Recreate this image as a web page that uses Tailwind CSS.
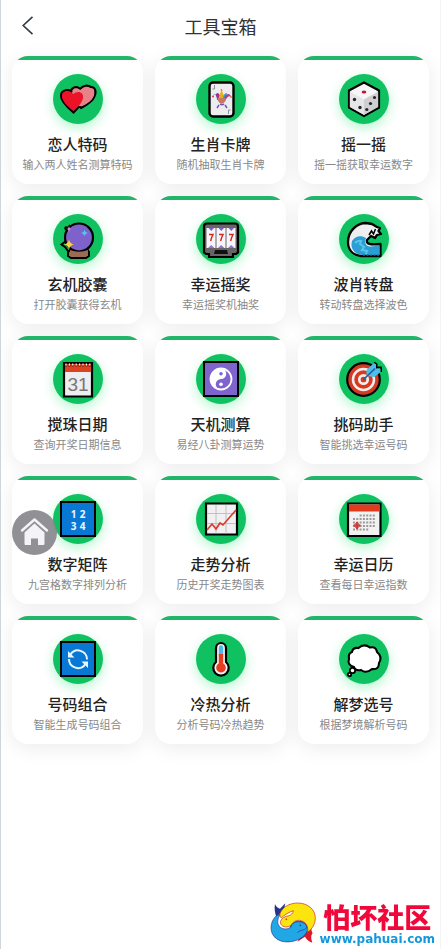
<!DOCTYPE html>
<html lang="zh-CN">
<head>
    <meta charset="UTF-8">
    <meta name="viewport" content="width=device-width, initial-scale=1.0">
    <title>工具宝箱</title>
    <script src="https://cdn.jsdelivr.net/npm/@tailwindcss/browser@4"></script>
</head>
<body class="bg-white font-['Noto_Sans_CJK_SC',sans-serif]">
    <div class="min-h-screen border-l border-l-gray-300 border-r border-r-gray-100">
        <header class="relative flex h-13 items-center justify-center">
            <button type="button" aria-label="返回" class="absolute left-4 flex h-8 w-6 items-center">
                <svg class="h-5 w-5" viewBox="0 0 20 20" fill="none" stroke="#333a45" stroke-width="1.6"><path d="M15.500 .8 6.200 9.500 15.500 18.200"/></svg>
            </button>
            <h1 class="text-lg text-[#333]">工具宝箱</h1>
        </header>

        <main id="herramientas" class="grid grid-cols-3 gap-3 px-[11px] pt-1 pb-8"></main>
    </div>

    <a href="#" aria-label="首页" class="fixed left-3 top-[510px] flex size-[45px] items-center justify-center rounded-full bg-[#858589]/90">
        <svg class="size-[45px]" viewBox="0 0 45 45">
            <path d="M10 20.500 22.500 9.500 35 20.500" fill="none" stroke="#f4f4f8" stroke-width="2.400" stroke-linejoin="round" stroke-linecap="round"/>
            <path d="M12.500 22.500 22.500 13.500 32.500 22.500V34a1 1 0 0 1-1 1H26v-6.500h-7V35h-5.500a1 1 0 0 1-1-1z" fill="#f4f4f8"/>
        </svg>
    </a>

    <a href="#" class="fixed right-1.5 bottom-1 flex items-center gap-1">
        <svg class="h-[42px] w-[46px]" viewBox="0 0 138 126">
            <path d="M15 6C18 14 23 18 30 20L46 4C44 17 41 25 32 33L19 44C15 34 12 20 15 6z" fill="#24348c"/>
            <path d="M100 94C112 86 119 80 124 71C123 82 125 88 128 94C123 99 122 107 127 122C117 119 110 112 105 104L82 119C89 109 93 101 100 94z" fill="#d9182b"/>
            <path d="M18 42C7 53 1 69 4 86C9 110 33 123 62 119C91 115 112 99 113 78C113 64 98 56 82 58C70 60 62 67 60 77C48 85 30 80 25 68C22 60 22 50 31 37z" fill="#22a7e5" stroke="#24348c" stroke-width="2"/>
            <path d="M31 32C41 12 61 3 85 3C112 4 137 21 136 50C135 66 128 79 113 91C116 73 107 57 88 55C77 54 68 60 64 69C54 78 38 76 33 67C26 54 43 43 54 42C64 40 69 33 70 26C58 30 44 38 34 48C29 44 29 38 31 32z" fill="#fbe50c" stroke="#c8202d" stroke-width="2"/>
            <path d="M62 77C65 63 77 57 92 60C106 63 111 71 110 78C102 87 86 83 82 93" fill="#22a7e5" stroke="#24348c" stroke-width="2"/>
            <circle cx="49" cy="52" r="2.500" fill="#c8202d"/><circle cx="91" cy="70" r="2.500" fill="#24348c"/>
        </svg>
        <span class="flex flex-col items-center">
            <span class="text-[27px] leading-8 font-black text-[#f0083a]">怕坏社区</span>
            <span class="font-['DejaVu_Sans',sans-serif] text-xs leading-3 font-bold text-[#1597dc]">www.pahuai.com</span>
        </span>
    </a>

    <script>
        // Patrones repetidos dentro de los iconos
        const puntos = [0, 1, 2, 3, 4].map(f => [0, 1, 2, 3, 4, 5, 6].map(c =>
            (f === 0 && c < 2) || (f === 4 && c > 4) ? '' : `<path d="M${7 + c * 3.3} ${13.5 + f * 3.5}h2v2h-2z" fill="#999"/>`
        ).join('')).join('');

        const anillas = [0, 1, 2, 3, 4, 5, 6, 7].map(i =>
            `<circle cx="${6 + i * 3.4}" cy="4.500" r="1.300" fill="#7d2417"/><path d="M${6 + i * 3.4} 2.500v2" stroke="#fff" stroke-width="1.200"/>`
        ).join('');

        const rodillos = [3.5, 13.5, 23.5].map(x => `
            <path d="M${x} 7h9v20h-9z" fill="#f7f5fa"/>
            <path d="M${x + 2} 7h5.500l-2.700 3z" fill="#7864c8"/>
            <path d="M${x + 1.5} 27l3.200-3 3.300 3z" fill="#8a78cf"/>
            <path d="M${x + 2.5} 13.500h4c-1 2-2 4-2.300 6.500" fill="none" stroke="#d12a20" stroke-width="1.500"/>
        `).join('');

        const iconos = {
            corazones: `
                <path d="M21 27C12 20 10.500 16 10.500 12C10.500 7 16 4 20 8C23 4 28 4 31 6C36 6 37 12 33 18C30 22 26 24 21 27z" fill="#e98288" stroke="#000" stroke-width="2.200"/>
                <path d="M13.500 31.500C6 25 1 20 1 15C1 9 9 7 13 12C18 8 24 11 23.500 17C23 22 18 27 13.500 31.500z" fill="#ec1328" stroke="#000" stroke-width="2.200"/>
                <path d="M22 8C27 5 36 7 34 14C33 19 27 23 22 25L17 25L12 13C12 8 17 6 20 9z" fill="#e98288"/>
                <path d="M13.500 30C6 24 2 20 2 15C2 10 9 8 13 13C18 9 24 11 23 17C22 22 18 26 13.500 30z" fill="#ec1328"/>`,
            comodin: `
                <rect x="6.500" y="1.500" width="24" height="34" rx="3.500" fill="#ededf0" stroke="#000" stroke-width="2.400"/>
                <path d="M11.500 4v4h-2M25.500 33v-4h2" fill="none" stroke="#88878f" stroke-width=".9"/>
                <path d="M14 19C14 14 11 11 10 15C12 12 17 13 16 19z" fill="#1b94b3"/>
                <path d="M15 18C13 15 12 14 14 12C16 12 17 14 18 17z" fill="#a72b91"/>
                <path d="M15.500 17L18.500 9L22 17z" fill="#e9ad16"/>
                <path d="M20 18C20 14 22 12 24 12L22 19z" fill="#19a7cc"/>
                <path d="M21 18C22 13 27 11 28 16C25 14 24 17 22 20z" fill="#b83a97"/>
                <path d="M15 17h7.500v3q-3.700 6-7.500 0z" fill="#c47b65"/>
                <path d="M16 24l-2 3M22 24l2 3M17 23q2 1.500 4 0" fill="none" stroke="#7655b4" stroke-width="1.500"/>
                <circle cx="10" cy="15.500" r="1" fill="#e42c63"/><circle cx="28" cy="16" r="1" fill="#e58b19"/><circle cx="18.500" cy="9" r="1" fill="#e58b19"/>`,
            dado: `
                <path d="M18 1.500 33 9.500V26.500L18 35 3 26.500V9.500z" fill="#f6f6f6" stroke="#000" stroke-width="2.200"/>
                <path d="M3.800 10.500 18 18.500V34L3.800 26z" fill="#e6e6e8"/>
                <path d="M32.200 10.500 18 18.500V34L32.200 26z" fill="#cfcfd2"/>
                <ellipse cx="18" cy="11" rx="2.300" ry="1.600" fill="#c2123e"/>
                <g fill="#272727"><circle cx="8.500" cy="18.500" r="1.700"/><circle cx="14" cy="26.500" r="1.700"/><circle cx="28.500" cy="16.500" r="1.600"/><circle cx="24.500" cy="22.500" r="1.600"/><circle cx="20.800" cy="28.500" r="1.600"/></g>`,
            bola: `
                <path d="M11 28h16l2 3v4l-3 2H11l-3-2v-4z" fill="#9b6b54" stroke="#000" stroke-width="2"/>
                <path d="M7 9C4 8 5 5 8 7l2-3M6 20 1.500 23.500 5 26l3 4h5" fill="none" stroke="#000" stroke-width="2"/>
                <circle cx="19" cy="16.500" r="14" fill="#7e62cb" stroke="#000" stroke-width="2.200"/>
                <path d="M10 29q9 3.500 18 0v3H10z" fill="#9b6b54"/>
                <path d="M9 5q.5 2.500 2 3-1.500.5-2 3-.5-2.500-2-3 1.500-.5 2-3z" fill="#d88ab9"/>
                <path d="M9 18.500q.8 4.200 5 5-4.200.8-5 5-.8-4.200-5-5 4.200-.8 5-5z" fill="#ffd03d"/>
                <path d="M24.500 8.500q.5 3 3.500 3.500-3 .5-3.500 3.500-.5-3-3.500-3.500 3-.5 3.500-3.500z" fill="#50c6f3"/>`,
            tragaperras: `
                <path d="M4 2.500h28q3 0 3 3v26l-2 1.500h-3v3H6v-3H3l-2-1.500v-26q0-3 3-3z" fill="#686467" stroke="#000" stroke-width="2.200"/>
                ${rodillos}
                <path d="M12 29h12l1 4H11z" fill="#111"/>`,
            ola: `
                <path d="M34.500 23V35H15C6 34 2 28 2 21C2 10 11 2 20 2L26 3L31 6L34 7L32.500 10L35 13L31 14L29 17L25 15L21 19C20 23 24 24 34.500 23z" fill="#eeeef0" stroke="#000" stroke-width="2.300" stroke-linejoin="round"/>
                <path d="M33.500 24.500V34H16C8 33 4 27 6 20C9 15 15 14 20 17C18 22 20 26 25 25.500z" fill="#2b9ed3"/>
                <path d="M9 22q3-3 6-2l-1 3 4 3-2 3 5 1-1 3" fill="none" stroke="#58c6eb" stroke-width="2"/>
                <path d="M23 14l2.500-4 2 3 2-5" fill="none" stroke="#000" stroke-width="1.500"/>
                <path d="M17 34h17" stroke="#1676a6" stroke-width="1.500" stroke-dasharray="2 1.500"/>`,
            hoja: `
                <path d="M4 2h28v33.500H4z" fill="#eeedf0" stroke="#000" stroke-width="2.200"/>
                <path d="M5 3h26v8H5z" fill="#dc421f"/>${anillas}
                <text x="18" y="29.500" text-anchor="middle" font-family="Liberation Sans" font-weight="400" font-size="19" fill="#777">31</text>`,
            yinyang: `
                <path d="M1 1h34v34H1z" fill="#8064cd" stroke="#000" stroke-width="2"/>
                <circle cx="18" cy="18" r="10.500" fill="#8064cd" stroke="#fff" stroke-width="1.800"/>
                <path d="M18 7.500a10.500 10.500 0 0 0 0 21a5.250 5.250 0 0 1 0-10.500a5.250 5.250 0 0 0 0-10.500z" fill="#fff"/>
                <circle cx="18" cy="12.800" r="1.800" fill="#8064cd"/><circle cx="18" cy="23.200" r="1.800" fill="#fff"/>`,
            diana: `
                <circle cx="17.500" cy="18.500" r="16.300" fill="#d63b22" stroke="#000" stroke-width="2.200"/>
                <circle cx="17.500" cy="18.500" r="10.500" fill="none" stroke="#f5eeee" stroke-width="2.500"/>
                <circle cx="17.500" cy="18.500" r="4.200" fill="#d63b22" stroke="#f5eeee" stroke-width="2.700"/>
                <path d="M28 1.500 30.500 3v3.500H35V11" fill="none" stroke="#000" stroke-width="2" stroke-linejoin="round"/>
                <path d="M20.500 15V9L28 2l2 1.500v4h4.500V11l-6 5z" fill="#4fbde9"/>
                <path d="M17.500 18.500 29 7.500" stroke="#195f9d" stroke-width="1.700"/>`,
            numeros: `
                <path d="M1 1h34v34H1z" fill="#0878d4" stroke="#000" stroke-width="2"/>
                <g fill="#e9f7ff" font-family="Noto Sans" font-weight="700" font-size="10" text-anchor="middle"><text x="13.500" y="16.500">1</text><text x="22.500" y="16.500">2</text><text x="13.500" y="28.500">3</text><text x="22.500" y="28.500">4</text></g>`,
            grafico: `
                <path d="M3 2.500h31v31H3z" fill="#f1f1f3" stroke="#000" stroke-width="2.200"/>
                <path d="M13 4v28.500M23 4v28.500M4 12.500h29M4 22.500h29" stroke="#bbb" stroke-width=".9"/>
                <path d="M4 29 9 23l4 5 4-6 3 2L33 9" fill="none" stroke="#dc3b2c" stroke-width="1.700"/>`,
            calendario: `
                <path d="M2 2.500h32.500V35H2z" fill="#f2f2f3" stroke="#000" stroke-width="2.200"/>
                <path d="M3 3.500h30.500v7H3z" fill="#df3c1f"/>${puntos}
                <path d="M11 21v7M7.500 24.500h7" stroke="#d13c38" stroke-width="2"/><circle cx="11" cy="24.500" r="2.300" fill="none" stroke="#d13c38"/>`,
            ciclo: `
                <path d="M1 1h34v34H1z" fill="#0878d4" stroke="#000" stroke-width="2"/>
                <path d="M10.500 13.500A9 9 0 0 1 27 18.500M25.500 23A9 9 0 0 1 9 18" fill="none" stroke="#e7f7ff" stroke-width="2"/>
                <path d="M8 10v6.500h6.500zM28 27v-6.500h-6.500z" fill="#e7f7ff"/>`,
            termometro: `
                <path d="M13 7a5 5 0 0 1 10 0V21a7.700 7.700 0 1 1-10 0z" fill="#f6f2f2" stroke="#000" stroke-width="2.200"/>
                <path d="M15.800 6.500a2.200 2.200 0 0 1 4.400 0V14h-4.400z" fill="#4bb9ed"/>
                <path d="M15.800 13h4.400v9.500a4.800 4.800 0 1 1-4.400 0z" fill="#e53c22"/>`,
            nube: `
                <circle cx="3.500" cy="33.500" r="1.700" fill="#fff" stroke="#000" stroke-width="1.800"/>
                <circle cx="6.500" cy="29.500" r="2.700" fill="#fff" stroke="#000" stroke-width="1.800"/>
                <path d="M12.500 7Q18 2 24 6.500Q30 5 31 11Q37 16 33 22Q33 29 26 28Q20 33 15 29Q9 30 8 26Q1 24 3 18Q2 12 6 11Q7 6 12.500 7z" fill="#fff" stroke="#000" stroke-width="2.100"/>`
        };

        const herramientas = [
            ['corazones', '恋人特码', '输入两人姓名测算特码'],
            ['comodin', '生肖卡牌', '随机抽取生肖卡牌'],
            ['dado', '摇一摇', '摇一摇获取幸运数字'],
            ['bola', '玄机胶囊', '打开胶囊获得玄机'],
            ['tragaperras', '幸运摇奖', '幸运摇奖机抽奖'],
            ['ola', '波肖转盘', '转动转盘选择波色'],
            ['hoja', '搅珠日期', '查询开奖日期信息'],
            ['yinyang', '天机测算', '易经八卦测算运势'],
            ['diana', '挑码助手', '智能挑选幸运号码'],
            ['numeros', '数字矩阵', '九宫格数字排列分析'],
            ['grafico', '走势分析', '历史开奖走势图表'],
            ['calendario', '幸运日历', '查看每日幸运指数'],
            ['ciclo', '号码组合', '智能生成号码组合'],
            ['termometro', '冷热分析', '分析号码冷热趋势'],
            ['nube', '解梦选号', '根据梦境解析号码']
        ];

        document.getElementById('herramientas').innerHTML = herramientas.map(([icono, titulo, texto]) => `
            <a href="#" class="flex flex-col items-center overflow-hidden rounded-2xl bg-white pb-3 shadow-[0_4px_20px_rgba(0,0,0,0.08)]">
                <span class="h-1 w-full bg-[#20b568]"></span>
                <span class="mt-3.5 flex size-[50px] items-center justify-center rounded-full bg-[#0fc160] shadow-[0_4px_12px_rgba(7,225,96,0.3)]">
                    <svg class="size-9 overflow-visible" viewBox="0 0 36 36">${iconos[icono]}</svg>
                </span>
                <h2 class="mt-2.5 text-[15px] leading-5 font-medium text-[#222]">${titulo}</h2>
                <p class="mt-0.5 text-[11px] leading-4 whitespace-nowrap text-[#888]">${texto}</p>
            </a>
        `).join('');
    </script>
</body>
</html>
